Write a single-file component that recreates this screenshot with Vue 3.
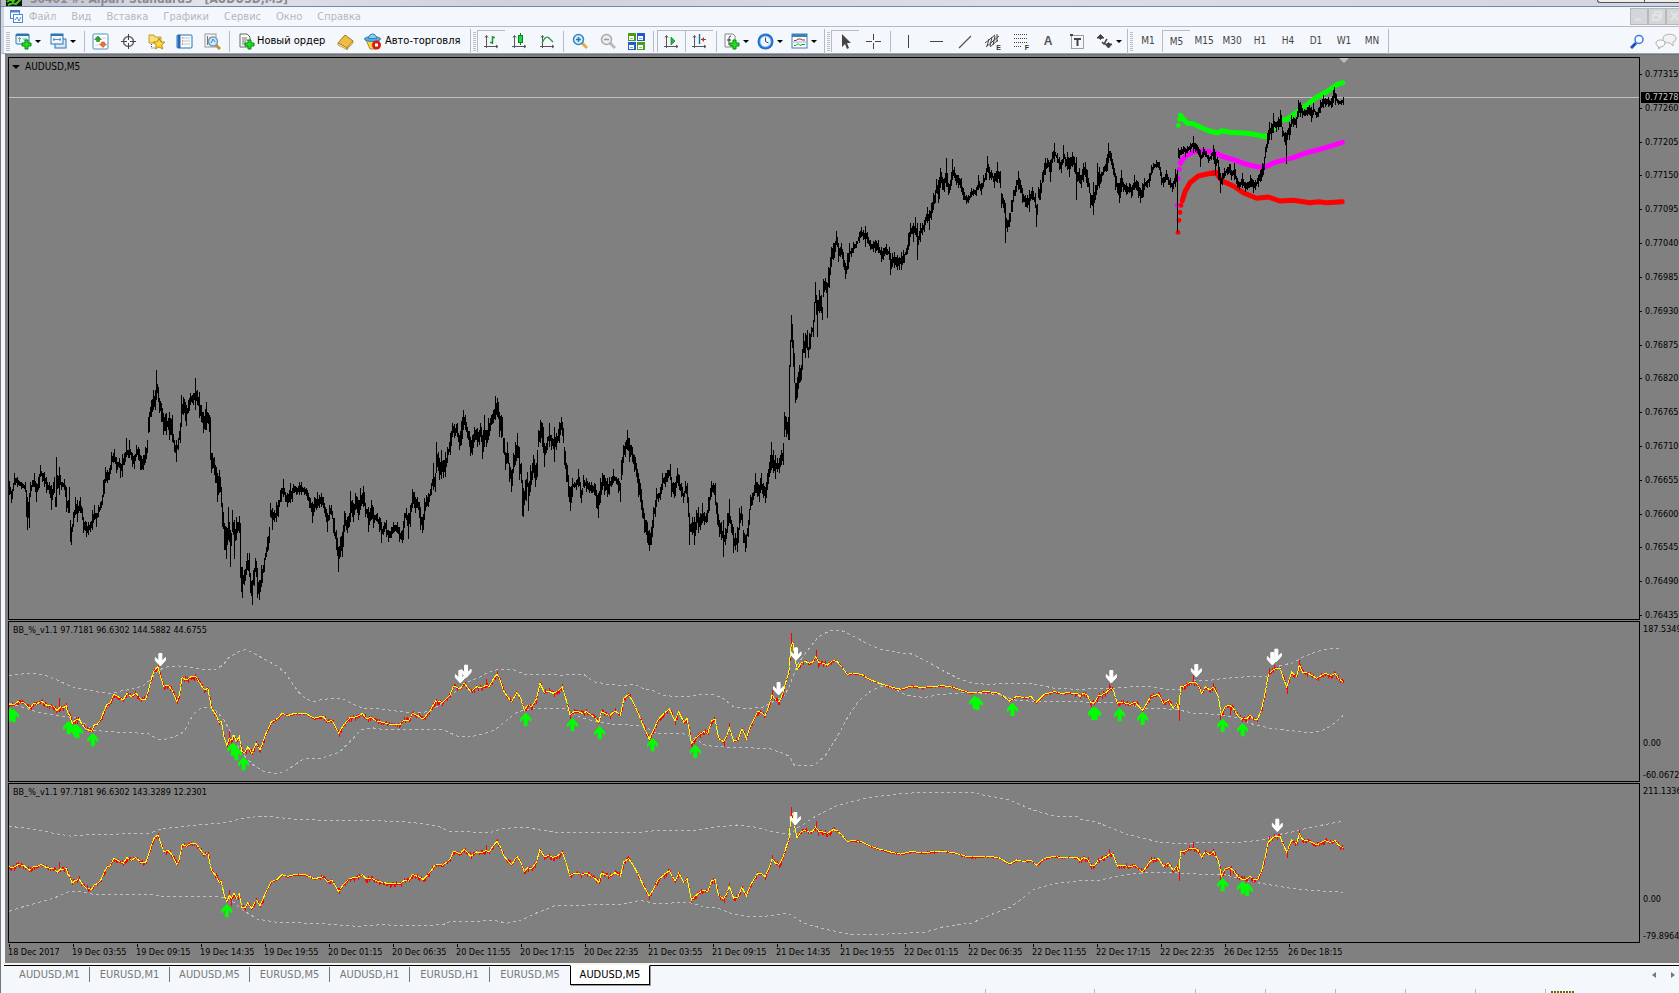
<script setup>
const menu = ['Файл', 'Вид', 'Вставка', 'Графики', 'Сервис', 'Окно', 'Справка']

const plus = '<path d="M10 7h3v3h3v3h-3v3h-3v-3H7v-3h3z" fill="#1fe01f" stroke="#078a12"/>'
const axes = '<path d="M3.500 3v12M1 13.500h14M2 4.500l1.500-2 1.500 2M13 12l2 1.500-2 1.500" fill="none" stroke="#555"/>'
const lens = (a, b, h) => `<path d="M10 10l5 5" stroke="${h}" stroke-width="3"/><circle cx="6.500" cy="6.500" r="5" fill="${a}" stroke="${b}" stroke-width="1.500"/>`
const tile = (x, y, c) => `<rect x="${x}" y="${y}" width="8" height="8" fill="${c}"/><rect x="${x + 1}" y="${y + 3}" width="5" height="4" fill="#fff"/><path d="M${x + 2} ${y + 5.5}h3" stroke="${c}" stroke-opacity=".6"/>`

const icons = {
  newChart: '<rect x="1" y="1" width="13" height="10" rx="1" fill="#eaf4fc" stroke="#2f74ad"/><path d="M1 2h13" stroke="#2f74ad" stroke-width="2"/><path d="M4.500 4v5M3 5.500h3M8 6h4" stroke="#6aa"/>' + plus,
  profiles: '<rect x="5" y="6" width="11" height="9" fill="#d7eafa" stroke="#2f74ad"/><rect x="1" y="1" width="12" height="10" fill="#eef6fd" stroke="#2f74ad"/><path d="M1 2h12" stroke="#2f74ad" stroke-width="2"/><path d="M3 6.500h8M4 5v3M10 5v3" stroke="#5e8fb5"/>',
  market: '<rect x="1" y="1" width="15" height="15" rx="1" fill="#fff" stroke="#4b93c7"/><path d="M3 4h4M3 7h1M10 5h4M3 12h4" stroke="#ccd"/><path d="M6 3l3.500 3.500H7.500v2h-3v-2H2.500z" fill="#2aa52a" stroke="#167016" stroke-width=".5"/><path d="M11 14.500L7.500 11H9.500V9h3v2h2z" fill="#f07038" stroke="#b33a10" stroke-width=".5"/>',
  target: '<circle cx="8.500" cy="8.500" r="5" fill="none" stroke="#666" stroke-width="1.500"/><path d="M8.500 1v6M8.500 10v6M1 8.500h6M10 8.500h6" stroke="#444"/>',
  favourites: '<path d="M1 2h5l1 2h6v6H1z" fill="#f9df7c" stroke="#c29a25"/><path d="M3.500 11v4h4" fill="none" stroke="#555" stroke-dasharray="1 1"/><path d="M11 5l1.700 3.700 4 .5-3 2.700.8 4-3.500-2-3.500 2 .8-4-3-2.700 4-.5z" fill="#ffd83c" stroke="#b8860b"/>',
  panel: '<rect x="1" y="2" width="15" height="13" rx="1" fill="#f7fbff" stroke="#2d6fb0"/><path d="M3 2v13" stroke="#2568b5" stroke-width="3"/><path d="M7 5h7M7 8h7M7 11h7" stroke="#c2c8d0"/><path d="M6 5h1M6 8h1M6 11h1" stroke="#c33"/>',
  tester: '<rect x="1" y="1" width="11" height="13" fill="#f5f5f0" stroke="#999"/><path d="M3.500 3v9M6 4v3" stroke="#678"/><path d="M12 12l4 4" stroke="#c7942a" stroke-width="3"/><circle cx="9" cy="8.500" r="4.500" fill="#cfe6fa" fill-opacity=".8" stroke="#6d9dc4" stroke-width="1.500"/><path d="M7 10l2-4 2 3" fill="none" stroke="#4479a8"/>',
  order: '<path d="M2 1h7l3 3v10H2z" fill="#fafafa" stroke="#666"/><path d="M4 5h5M4 7h6M4 9h4M4 11h3" stroke="#777"/>' + plus,
  book: '<path d="M1 10l7-8 8 6-6 7z" fill="#edbd45" stroke="#a8741a"/><path d="M1 10l9 5v1.500L1 12zM10 15l6-7v2l-6 6.500z" fill="#fff0b8" stroke="#a8741a" stroke-width=".7"/>',
  auto: '<path d="M2 7h13l-3 9H6z" fill="#f4d24a" stroke="#b98d1d"/><ellipse cx="8.500" cy="6" rx="8" ry="2.500" fill="#55aee0" stroke="#2e7fb3"/><path d="M4.500 5.500c0-6 8-6 8 0z" fill="#86cdf0" stroke="#2e7fb3"/><circle cx="12.500" cy="12" r="4.500" fill="#d81c10"/><rect x="11" y="10.500" width="3" height="3" fill="#fff"/>',
  bars: axes + '<path d="M9.500 3v8M9.500 4.500H12M7 9.500h2.500" stroke="#159a25" stroke-width="1.500"/>',
  candles: axes + '<path d="M9.500 0v12" stroke="#075"/><rect x="7.500" y="2.500" width="4" height="7" fill="#1fd846" stroke="#08831d"/>',
  line: axes + '<path d="M3 10c3-6 5-7 7-5l4 4" fill="none" stroke="#2a9a35" stroke-width="1.300"/>',
  zoomIn: lens('#d3eefc', '#3a82c0', '#e0b13c') + '<path d="M6.500 4v5M4 6.500h5" stroke="#2879bc" stroke-width="1.500"/>',
  zoomOut: lens('#ededed', '#aaa', '#bbb') + '<path d="M4 6.500h5" stroke="#999" stroke-width="1.500"/>',
  tiles: tile(0, 0, '#4b9d18') + tile(9, 0, '#2459c9') + tile(0, 9, '#2459c9') + tile(9, 9, '#4b9d18'),
  scroll: axes + '<path d="M8 4l4 4-4 4z" fill="#24b43a" stroke="#138025" stroke-width=".7"/>',
  shift: axes + '<path d="M8.500 1v10" stroke="#2471a8" stroke-width="1.500"/><path d="M10 6.500h5M12.500 4.500v4M11.500 5.500v2" fill="none" stroke="#b4380f"/>',
  indicators: '<path d="M2 1h8l2 2v11H2z" fill="#fafafa" stroke="#888"/><path d="M8 3C6 3 6 5 6 7v5M4 7h4" fill="none" stroke="#333"/>' + plus,
  clock: '<circle cx="8.500" cy="8.500" r="8" fill="#1d6fd0"/><circle cx="8.500" cy="8.500" r="5.500" fill="#eef6ff" stroke="#7ab4ee"/><path d="M8.500 4.500v4l3 1.500" fill="none" stroke="#444"/>',
  template: '<rect x="1" y="1" width="15" height="14" fill="#fafdff" stroke="#3e80b8"/><path d="M1 2.500h15" stroke="#3e80b8" stroke-width="3"/><path d="M3 7.500h2l2-1.500h3l1 1h3" fill="none" stroke="#a33"/><path d="M3 12.500h2l2-2 2 2 2-1h3" fill="none" stroke="#293"/><path d="M2 9h13" stroke="#9bc"/>',
  cursor: '<path d="M5 1v13l3-3 2 5 2-1-2-5h4z" fill="#444"/>',
  cross: '<path d="M8.500 1v6M8.500 10v6M1 8.500h6M10 8.500h6" stroke="#444"/>',
  vertical: '<path d="M8.500 2v13" stroke="#444"/>',
  horizontal: '<path d="M2 8.500h13" stroke="#444"/>',
  trend: '<path d="M3 15L15 3" stroke="#555" stroke-width="1.200"/>',
  channel: '<path d="M1 10l10-8M2 14L15 3M6 14l8-7M5 6l-2 7M8 4L6 13M11 3L9 12M13 1v8" stroke="#444"/>',
  fibo: '<path d="M2 1.500h14M2 5.500h14M2 9.500h14M2 13.500h8" stroke="#444" stroke-dasharray="1 1"/>',
  textLabel: '<rect x="3.500" y="2.500" width="12" height="13" fill="none" stroke="#444" stroke-dasharray="1 1"/><rect x="2" y="1" width="3" height="2" fill="#444"/><path d="M6 6h7M9.500 6v7" stroke="#444" stroke-width="2"/>',
  marks: '<path d="M1 5l3.500-3.500L8 5H6l-1.500 1.500L3 5zM9 11h2l1.500-1.500L14 11h2l-3.500 4z" fill="#444" stroke="#444"/><path d="M6 9l2 2 3-5" fill="none" stroke="#444" stroke-width="1.500"/>',
}

const toolbar = [
  { k: 'grip' }, { k: 'drop', i: 'newChart', t: 'Новый график' }, { k: 'drop', i: 'profiles', t: 'Профили' }, { k: 'sep', c: 's4' },
  { i: 'market', t: 'Обзор рынка' }, { i: 'target', t: 'Окно данных' }, { i: 'favourites', t: 'Навигатор' }, { i: 'panel', t: 'Терминал' }, { i: 'tester', t: 'Тестер' }, { k: 'sep', c: 's7' },
  { k: 'wide', i: 'order', l: 'Новый ордер', c: 'order' }, { i: 'book', t: 'Редактор' }, { k: 'wide', i: 'auto', l: 'Авто-торговля', c: 'auto' }, { k: 'sep', c: 's4 full' },
  { k: 'grip' }, { i: 'bars', t: 'Бары', on: true }, { i: 'candles', t: 'Свечи' }, { i: 'line', t: 'Линия' }, { k: 'sep', c: 's5' },
  { i: 'zoomIn', t: 'Увеличить' }, { i: 'zoomOut', t: 'Уменьшить' }, { i: 'tiles', t: 'Мозаика' }, { k: 'sep', c: 's7' },
  { i: 'scroll', t: 'Автопрокрутка', on: true }, { i: 'shift', t: 'Сдвиг графика', on: true }, { k: 'sep', c: 's7' },
  { k: 'drop', c: 'narrow', i: 'indicators', t: 'Индикаторы' }, { k: 'drop', c: 'narrow', i: 'clock', t: 'Периоды' }, { k: 'drop', c: 'narrow', i: 'template', t: 'Шаблоны' }, { k: 'sep', c: 's4 full' },
  { k: 'grip' }, { i: 'cursor', t: 'Курсор', on: true }, { i: 'cross', t: 'Перекрестие' }, { k: 'sep', c: 's7' },
  { i: 'vertical', t: 'Вертикальная линия' }, { i: 'horizontal', t: 'Горизонтальная линия' }, { i: 'trend', t: 'Трендовая линия' },
  { i: 'channel', t: 'Канал', g: 'E' }, { i: 'fibo', t: 'Фибоначчи', g: 'F' }, { k: 'letter', l: 'A' }, { i: 'textLabel', t: 'Текстовая метка' }, { k: 'drop', c: 'centred', i: 'marks', t: 'Стрелки' }, { k: 'sep', c: 's4 full' },
  { k: 'grip' },
  ...['M1', 'M5', 'M15', 'M30', 'H1', 'H4', 'D1', 'W1', 'MN'].map(l => ({ k: 'period', l, on: l === 'M5' })),
  { k: 'sep', c: 's4 full' },
]

const prices = ['0.77315', '0.77260', '0.77205', '0.77150', '0.77095', '0.77040', '0.76985', '0.76930', '0.76875', '0.76820', '0.76765', '0.76710', '0.76655', '0.76600', '0.76545', '0.76490', '0.76435']
const times = ['18 Dec 2017', '19 Dec 03:55', '19 Dec 09:15', '19 Dec 14:35', '19 Dec 19:55', '20 Dec 01:15', '20 Dec 06:35', '20 Dec 11:55', '20 Dec 17:15', '20 Dec 22:35', '21 Dec 03:55', '21 Dec 09:15', '21 Dec 14:35', '21 Dec 19:55', '22 Dec 01:15', '22 Dec 06:35', '22 Dec 11:55', '22 Dec 17:15', '22 Dec 22:35', '26 Dec 12:55', '26 Dec 18:15']
const tabs = ['AUDUSD,M1', 'EURUSD,M1', 'AUDUSD,M5', 'EURUSD,M5', 'AUDUSD,H1', 'EURUSD,H1', 'EURUSD,M5', 'AUDUSD,M5']

let seed = 77278
const rnd = () => {
  seed = (seed * 1103515245 + 12345) % 2147483648
  return seed / 2147483648
}
// Each block of samples has its own origin and its own units per pixel.
const decode = (x0, y0, sx, text) => text.split(';').map(s => {
  const [x, ...ys] = s.trim().split(/\s+/).map(Number)
  return [x0 + x / sx, ...ys.map(y => y0 + y / 3)]
})
const strips = (a, b, c) => [...decode(0, 615, 2.8, a), ...decode(540, 615, 2.8, b), ...decode(1080, 615, 3, c)]
const toPoints = pts => pts.map(([x, y]) => `${x.toFixed(1)},${y.toFixed(1)}`).join(' ')

const range = [
  ...decode(0, 350, 3, '26 393 435;34 422 458;43 370 405;52 382 410;62 395 418;74 395 425;79 420 500;82 440 540;86 430 535;89 397 440;97 390 410;101 368 410;107 400 455;113 382 420;121 345 382;127 370 395;133 365 410;139 380 430;146 395 432;152 405 480;158 395 435;163 380 430;166 440 470;169 322 470;177 350 435;184 395 420;191 388 420;197 410 485;203 450 490;207 410 490;210 510 575;214 530 585;219 485 530;226 440 495;232 450 515;239 440 490;245 475 510;250 500 550;257 515 560;264 515 555;271 515 545;277 480 540;282 465 510;287 490 530;294 465 500;300 455 480;306 435 465;310 390 440;315 350 400;321 360 400;327 355 390;334 305 360;341 297 335;348 320 370;356 325 355;360 340 383;366 312 380;373 310 345;377 265 322;383 300 325;388 270 325;396 310 350;402 315 358;408 285 320;414 290 330;420 315 360;430 315 360;436 290 340;441 270 310;445 200 250;452 150 200;458 120 180;465 120 180;469 60 150;474 110 155;478 145 190;484 160 215;489 190 255;498 190 255;503 205 240;508 185 270;516 195 275;521 270 305;528 270 335;533 265 300;539 220 280;542 135 230;549 142 195;557 165 228;564 150 190;570 130 165;578 130 165;586 85 180;592 120 165;596 125 205;603 165 215;610 185 250;618 155 240;626 195 245;629 200 330;634 310 370;641 320 375;646 345 400;652 370 455;658 360 430;664 410 470;667 460 530;673 520 600;679 530 628;685 470 570;691 540 650;697 480 545;703 510 628;709 500 570;716 498 550;719 520 685;724 650 725;727 650 745;733 660 705;740 610 660;746 610 680;750 670 730;755 690 765;760 660 705;765 625 665;771 655 745;778 690 750;784 645 710;791 625 665;797 590 620;802 560 605;806 530 580;810 460 500;816 475 540;823 480 515;829 455 515;835 450 500;841 420 455;849 388 440;855 425 455;862 430 470;870 400 460;876 415 455;880 402 430;888 410 435;896 395 435;904 395 435;912 410 435;920 420 450;928 440 475;936 455 518;942 440 485;950 425 475;957 435 475;964 428 470;972 460 490;980 490 545;987 465 510;993 465 495;1000 505 550;1008 540 600;1014 590 665;1019 560 620;1026 545 620;1032 482 545;1040 500 550;1046 490 530;1051 423 515;1058 460 515;1066 428 480;1073 450 510;1080 415 480;1088 408 470;1096 460 500;1104 470 545;1112 450 510;1120 470 535;1130 490 515;1138 500 545;1144 515 578;1152 515 545;1158 510 560;1165 540 575;1172 530 565;1180 515 550;1190 515 550;1198 530 575;1205 540 580;1211 490 535;1217 475 510;1223 490 568;1229 465 530;1237 417 475;1245 440 490;1252 440 475;1259 470 540'),
  ...decode(400, 350, 3, '66 500 548;72 445 510;78 435 470;85 430 470;92 400 435;98 340 420;104 370 425;109 275 370;116 325 390;123 300 388;130 330 385;136 305 380;142 290 340;149 250 315;156 218 260;163 222 265;170 218 260;176 255 300;182 212 285;188 180 240;196 195 240;202 230 265;209 260 318;215 255 315;222 230 275;230 235 290;236 240 285;241 220 260;246 255 328;251 195 290;259 240 290;265 205 270;272 195 225;280 180 220;286 138 210;292 145 200;298 185 260;304 195 265;310 265 310;316 305 360;322 275 340;328 340 395;334 360 425;340 310 370;346 275 345;352 250 325;357 290 390;362 340 400;365 390 497;370 415 500;376 390 450;380 365 410;385 400 482;391 345 425;398 315 370;404 345 412;410 300 380;413 240 290;419 210 280;425 220 290;432 280 352;440 260 300;448 220 290;454 255 300;461 230 335;468 250 300;476 215 280;482 202 240;488 235 280;493 290 345;499 340 395;504 375 440;509 410 482;515 385 440;522 395 415;528 390 420;535 358 410;540 395 445;544 420 458;550 375 410;558 385 425;566 395 430;574 395 430;582 400 435;588 420 475;594 430 505;600 385 460;606 370 420;613 375 435;620 385 440;628 380 435;634 380 410;640 358 400;648 382 402;655 385 430;660 400 455;664 330 390;668 285 340;675 275 320;682 240 300;688 265 335;695 290 335;702 315 365;708 340 380;714 370 440;720 400 455;726 450 505;733 490 550;740 515 580;746 540 602;752 530 585;758 470 535;764 450 500;767 415 470;773 430 455;780 410 450;786 370 420;794 370 410;800 360 395;809 342 390;814 380 440;823 400 445;830 355 400;836 375 420;843 400 440;850 430 460;856 393 430;860 400 460;864 440 500;868 490 585;876 500 555;883 500 585;888 480 540;895 470 548;901 490 540;905 460 520;911 485 525;918 490 520;925 440 490;932 393 440;938 398 430;944 400 465;950 460 525;956 510 560;963 515 570;970 510 620;976 535 585;982 490 550;986 447 520;993 510 550;1000 530 608;1006 550 600;1012 530 605;1018 475 540;1023 467 510;1030 540 580;1036 555 605;1043 510 560;1050 435 480;1057 430 465;1065 370 430;1072 395 440;1076 405 455;1082 370 420;1088 400 445;1094 410 458;1100 370 420;1106 335 380;1112 275 360;1118 300 370;1124 315 388;1130 325 365;1136 325 370;1142 300 345;1148 280 345'),
  ...decode(770, 120, 3, '42 875 950;48 890 950;53 890 960;56 735 960;60 660 740;64 585 665;68 660 740;72 700 790;76 790 850;82 770 835;87 735 790;93 735 780;98 640 700;104 640 715;110 630 690;114 680 713;118 640 690;123 620 650;128 600 650;131 545 605;134 485 550;140 540 650;146 510 580;152 525 580;156 560 600;159 478 530;166 475 510;172 490 595;175 440 500;180 410 465;184 380 440;190 370 420;199 332 375;205 370 425;212 370 405;219 395 440;226 430 478;232 400 450;236 370 425;243 385 410;250 365 400;258 362 385;266 335 370;272 322 350;278 330 360;284 318 380;292 335 370;300 360 390;308 362 395;316 360 400;324 360 400;332 380 425;340 385 420;348 372 405;356 380 420;359 400 465;366 400 440;372 395 445;380 405 450;387 410 450;394 395 450;400 390 430;408 385 405;414 340 390;420 310 350;428 310 365;435 292 345;442 310 420;449 310 365;456 310 345;462 300 335;470 260 310;476 270 330;483 250 300;490 220 270;498 178 220;504 180 250;509 143 205;516 170 210;522 175 215;527 115 200;534 190 225;540 180 210;545 118 180;551 140 175;558 165 195;565 165 205;572 175 215;580 205 240;588 225 253;595 225 250;602 205 230;610 208 228;618 200 228;625 165 210;632 190 225;640 165 200;645 160 180;650 108 155;656 140 180;664 150 180;672 160 205;680 125 190;688 155 190;694 220 265;700 235 265;706 250 368;712 300 335;718 280 320;724 240 275;730 210 245;737 180 215;744 152 210;750 180 220;757 205 250;764 225 260;771 225 265;778 210 275;786 200 240;794 220 265;799 255 322;805 200 235;811 180 240;816 155 190;824 115 165;832 115 145;839 120 185;846 95 130;853 70 125;860 100 130;868 112 150;874 120 158;879 75 130;886 110 140;892 95 150;898 115 170;905 95 140;912 110 155;919 110 240;926 145 190;932 165 205;938 130 185;944 125 170;950 150 200;956 190 220;961 220 265;970 185 285;976 195 240;982 130 210;988 140 205;994 155 185;1000 140 165;1007 115 155;1015 70 130;1022 100 135;1029 130 165;1036 160 210;1042 190 220;1046 190 250;1052 150 215;1060 185 215;1068 190 225;1076 190 220;1084 200 235;1092 165 210;1098 180 210;1104 185 235;1110 205 250;1116 190 235;1122 175 210;1130 180 205;1136 160 200;1143 135 165;1150 130 150;1158 120 145;1166 125 150;1173 155 195;1180 170 200;1187 150 180;1194 170 195;1200 175 205;1207 190 215;1214 148 200;1220 150 200;1222 150 335'),
  ...decode(1150, 60, 3, '85 265 290;92 262 285;100 258 282;106 265 290;112 258 280;120 250 275;128 228 280;136 250 275;143 260 285;151 270 320;158 262 290;166 272 292;174 285 310;182 280 300;188 255 300;194 275 345;200 290 310;205 300 360;209 340 400;215 340 375;222 325 355;230 320 345;237 312 340;244 330 360;252 310 360;260 355 385;268 365 390;276 340 385;284 365 395;292 365 390;300 345 380;308 360 400;316 360 390;324 345 380;330 330 365;336 310 350;341 290 330;346 260 295;351 220 265;357 185 240;363 190 240;370 160 220;377 185 215;384 170 210;391 150 200;397 200 230;403 220 245;407 220 312;411 210 240;417 185 240;424 165 200;430 170 200;437 170 205;444 120 170;450 125 170;456 145 175;463 148 168;470 140 168;476 135 165;483 140 185;490 130 165;497 155 175;504 145 170;511 120 160;518 105 145;526 115 140;534 110 140;542 115 145;548 90 130;551 82 115;556 100 135;564 120 135;572 120 135;578 110 135;581 108 125'),
]

function barsPath() {
  const peaks = new Map(range.map(([x, hi, lo]) => [Math.round(x), [hi, lo]]))
  let d = ''
  let close = null
  let k = 0
  for (let x = 9; x <= 1343; x++) {
    while (k < range.length - 2 && range[k + 1][0] < x) k++
    const [xa, ha, la] = range[k]
    const [xb, hb, lb] = range[k + 1]
    const t = Math.max(0, Math.min(1, (x - xa) / (xb - xa || 1)))
    const mid = (ha + la + (hb + lb - ha - la) * t) / 2
    const half = Math.min(la - ha, lb - hb) / 2
    const next = mid + half * (rnd() * 1.4 - 0.7)
    let hi = Math.min(close ?? next, next, mid - half * 0.3) - rnd() * half * 0.4
    let lo = Math.max(close ?? next, next, mid + half * 0.3) + rnd() * half * 0.4
    const peak = peaks.get(x)
    if (peak) [hi, lo] = peak
    if (x === 1178) [hi, lo] = [148, 158]
    close = Math.max(hi, Math.min(lo, next))
    d += `M${x}.5 ${Math.round(hi)}V${Math.max(Math.round(lo), Math.round(hi) + 3)}`
  }
  return d
}
const bars = barsPath()

const bandSet = [
  { c: 'lime', dots: '85 196;89 178;372 205', lines: ['91 166;100 177;112 190;130 191;150 201;180 214;203 219;215 212;240 217;290 220;320 224;345 230;350 226', '395 180;412 178;440 157;470 135;500 112;530 95;560 74;578 68'] },
  { c: 'magenta', dots: '82 436;85 355;88 328', lines: ['91 310;97 298;110 286;130 275;160 273;195 278;220 290;250 299;290 313;320 320;345 321;375 307;430 293;470 278;520 265;577 247'] },
  { c: 'red', dots: '84 517;87 481;90 457;93 436', lines: ['97 422;105 395;120 368;145 348;175 341;198 337;215 362;250 378;280 398;320 415;355 411;390 423;430 421;480 428;505 425;530 428;577 425'] },
].map(b => ({ c: b.c, dots: decode(1150, 60, 3, b.dots), lines: b.lines.map(l => toPoints(decode(1150, 60, 3, l))) }))

const base = strips(
  '26 268;38 270;50 260;68 264;82 280;95 265;103 268;115 258;130 270;150 275;160 287;170 275;178 278;185 272;190 295;195 300;202 325;212 315;222 312;228 325;240 342;256 348;264 330;272 328;282 315;292 285;300 268;308 265;318 238;330 245;345 255;355 235;368 245;380 235;395 252;408 252;416 225;424 190;432 165;442 155;450 185;458 215;470 210;482 225;495 260;502 240;510 188;522 195;535 185;548 185;560 205;572 225;582 220;592 280;604 298;614 322;620 320;628 370;635 390;642 370;648 378;655 360;662 378;670 365;677 410;686 412;694 395;705 415;717 385;728 405;735 385;745 355;760 320;778 310;790 295;805 302;825 295;855 295;880 310;903 303;918 320;930 315;948 355;962 330;980 308;1000 305;1015 295;1025 310;1040 308;1055 318;1070 322;1090 328;1120 328;1132 315;1145 315;1155 295;1170 302;1185 312;1205 285;1220 258;1240 262;1260 240;1270 212;1288 222;1300 205;1318 230;1335 215;1350 218;1360 210;1370 215;1382 190;1392 178;1400 195;1412 232;1432 260;1448 232;1458 250;1468 285;1478 270;1488 275;1502 252',
  '0 205;12 232;25 228;36 235;50 228;62 215;72 250;84 300;95 290;108 290;118 295;130 290;150 305;165 322;172 290;195 302;210 288;225 300;235 250;248 238;260 260;275 295;290 335;306 372;318 345;330 315;350 292;362 282;378 318;388 290;403 322;412 310;424 385;435 370;445 360;458 350;470 355;480 318;490 312;500 370;514 380;524 360;530 338;542 378;554 375;565 340;578 370;588 335;600 310;610 290;620 292;630 302;640 275;650 240;660 255;670 260;680 235;690 195;697 170;702 100;708 80;714 130;720 165;730 145;740 138;755 145;765 140;772 125;780 142;795 145;805 150;820 136;832 140;845 155;860 178;875 175;900 178;920 192;945 203;980 215;1010 223;1040 213;1070 218;1100 214;1130 212;1160 218;1200 233;1255 230;1285 235;1315 258;1335 243;1355 248;1375 245;1390 262;1412 238;1440 230;1460 235;1480 233;1505 236',
  '0 245;10 235;22 240;32 262;45 262;55 242;65 240;78 232;92 220;100 225;112 265;122 262;135 264;150 268;165 262;178 275;187 287;200 265;212 245;235 238;250 265;265 255;280 280;290 265;296 285;302 215;315 212;330 202;345 202;355 210;365 235;375 215;390 225;400 215;415 245;424 300;435 275;448 270;460 280;475 305;490 312;502 310;510 300;520 312;533 312;545 280;555 235;565 180;578 165;588 160;600 160;610 190;620 215;635 172;650 185;658 150;668 172;685 175;710 190;735 175;752 182;765 175;775 190;788 200')
const spikes = strips('166 250;442 147;640 348;648 405;948 365;1360 192;1392 168;1512 203', '62 208;424 395;514 395;530 325;650 226;704 55;772 105;778 158;1390 266', '32 276;86 206;296 318;340 180;400 205;421 315;450 300;497 322;568 158;583 150;620 238;656 136')

function oscillator(map) {
  const wave = base.map(([x, y]) => [x, map(y)])
  let red = ''
  let k = 0
  for (let x = 9; x <= 1343; x++) {
    while (k < wave.length - 2 && wave[k + 1][0] < x) k++
    const [xa, ya] = wave[k]
    const [xb, yb] = wave[k + 1]
    const y = ya + (yb - ya) * Math.min(1, (x - xa) / (xb - xa))
    const calm = (x > 835 && x < 1075) || (x > 265 && x < 320)
    const y2 = y + (rnd() - 0.5) * (calm ? 2 : 6)
    red += `M${x}.5 ${Math.round(Math.min(y, y2))}V${Math.round(Math.max(y, y2)) + 1}`
  }
  for (const [x, y] of spikes) {
    const near = wave.reduce((a, b) => (Math.abs(b[0] - x) < Math.abs(a[0] - x) ? b : a))
    red += `M${Math.round(x)}.5 ${Math.round(map(y))}V${Math.round(near[1])}`
  }
  return { line: toPoints(wave), red }
}

const subs = [
  {
    id: 'a', top: 622, title: 'BB_%_v1.1 97.7181 96.6302 144.5882 44.6755', max: '187.5349', min: '-60.0672',
    ...oscillator(y => y),
    upper: strips(
      '26 181;80 175;120 178;160 195;200 215;240 224;280 232;310 235;340 228;370 222;400 213;420 195;440 170;460 157;500 153;540 158;580 164;605 162;625 150;640 128;665 112;688 103;705 112;740 132;775 153;800 175;815 200;835 230;855 250;875 260;900 254;930 250;960 252;990 268;1015 280;1060 281;1110 288;1150 293;1190 291;1210 285;1240 262;1260 245;1280 225;1300 205;1340 188;1370 170;1400 162;1435 163;1470 178',
      '0 178;30 178;60 181;90 178;125 180;150 200;190 208;240 212;265 208;290 222;320 228;345 242;380 244;420 244;450 238;490 240;515 252;545 278;580 280;620 278;650 262;685 240;700 210;720 150;750 105;780 65;810 48;845 47;880 65;920 88;960 105;1000 112;1040 117;1080 137;1130 168;1170 190;1210 204;1250 208;1300 206;1350 205;1390 208;1440 220;1505 223',
      '0 223;40 221;90 222;140 216;190 214;230 217;260 223;300 223;330 208;345 195;390 196;430 190;470 188;510 184;560 184;575 170;600 152;640 143;670 125;710 110;750 100;783 102'),
    lower: strips(
      '26 265;60 275;100 290;150 299;185 305;215 308;235 325;260 345;300 350;350 352;415 356;440 372;465 372;490 365;515 350;540 300;560 282;585 276;600 285;625 310;650 360;670 400;690 430;715 455;740 470;775 476;800 468;825 450;850 432;900 430;950 412;980 380;1010 345;1040 338;1070 343;1240 344;1280 363;1315 366;1350 358;1385 345;1420 315;1450 290;1480 282',
      '0 280;70 280;90 295;120 310;150 318;200 328;290 332;325 355;400 355;440 375;465 392;550 398;640 400;680 415;700 425;712 450;770 450;800 420;830 370;860 310;890 260;930 225;960 213;990 220;1020 238;1050 245;1080 247;1110 240;1150 236;1190 232;1250 235;1290 240;1330 255;1400 261;1505 259',
      '0 260;40 265;90 262;140 266;190 280;250 280;300 286;350 296;420 298;470 308;520 328;570 340;620 346;680 352;720 350;750 335;770 318;788 302'),
    down: strips('449 135;1289 186;1305 170', '717 118;668 222', '94 186;349 168;577 132;589 122'),
    up: strips('28 298;38 301;192 337;211 345;217 349;260 373;652 401;662 415;682 445;1472 312', '91 328;167 352;315 388;435 408;1217 261;1225 264;1323 282', '40 294;47 295;119 298;188 309;428 330;488 343'),
  },
  {
    id: 'b', top: 784, title: 'BB_%_v1.1 97.7181 96.6302 143.3289 12.2301', max: '211.1336', min: '-79.8964',
    ...oscillator(y => 615 + ((y - 615) * 3 * 0.848 + 528.5) / 3),
    upper: strips(
      '26 634;100 643;150 655;200 664;250 658;415 656;450 642;560 629;620 625;690 608;740 603;820 612;900 616;1040 616;1150 622;1225 632;1260 650;1310 650;1370 654;1410 640;1470 637',
      '0 645;40 651;290 651;320 647;420 648;490 636;550 630;600 636;650 650;700 658;720 640;770 605;830 572;920 548;1020 535;1120 531;1220 533;1240 540;1310 553;1380 585;1440 603;1505 606',
      '0 612;50 622;140 658;240 682;300 686;400 682;490 681;550 674;600 658;640 650;700 635;788 619'),
    lower: strips(
      '26 889;60 877;100 865;150 850;190 831;230 830;270 840;430 838;450 844;600 843;640 850;680 885;720 912;770 921;900 926;1000 934;1070 929;1150 933;1240 929;1260 920;1310 921;1380 915;1420 925;1460 915;1500 895',
      '0 890;40 873;230 867;280 856;320 865;420 863;460 876;500 880;540 897;590 906;650 902;695 895;740 925;800 943;870 958;960 958;1080 951;1130 935;1210 924;1260 900;1320 875;1380 825;1440 805;1505 799',
      '0 797;60 795;110 785;160 775;250 772;330 776;440 780;500 797;560 808;620 818;690 826;788 832'),
    down: [...decode(540, 615, 2.8, '715 612'), ...decode(1080, 615, 3, '592 632')],
    up: [...decode(0, 615, 2.8, '635 886'), ...decode(1080, 615, 3, '428 808;488 817;502 823')],
  },
]
const arrow = 'M-1.5 6.500V-1L-5 2.500V-0.500L0 -6L5 -0.500V2.500L1.500 -1V6.500Z'
</script>

<template>
  <div class="app">
    <header class="title">
      <svg class="logo" width="16" height="16" viewBox="0 0 16 16" aria-hidden="true">
        <rect width="16" height="16" fill="#111" /><path d="M1 12l4-3 2 3 3-5 5-3M2 15l5-2 3 1 5-5" fill="none" stroke="#47c91a" stroke-width="2" />
      </svg>
      <span class="caption">50401 #: Alpari-Standard3 - [AUDUSD,M5]</span>
      <span class="frame"><i></i></span>
    </header>
    <nav class="menu">
      <svg width="15" height="15" viewBox="0 0 15 15" aria-hidden="true">
        <rect x="1.500" y="1.500" width="9" height="8" fill="#fff" stroke="#4b86d6" /><path d="M1 2.500h10" stroke="#4b86d6" stroke-width="2" />
        <rect x="4.500" y="5.500" width="9" height="8" fill="#fff" stroke="#4b86d6" /><path d="M6 11l2-3 2 4 2-4" fill="none" stroke="#4b86d6" />
      </svg>
      <button v-for="m in menu" :key="m" type="button" class="menu-item">{{ m }}</button>
      <div class="mdi">
        <button type="button" aria-label="Свернуть"><svg width="14" height="14"><path d="M3 10.500h6" stroke="#e2e3e5" stroke-width="2" /></svg></button>
        <button type="button" aria-label="Восстановить"><svg width="14" height="14"><path d="M5 5V3h6v6H9M3 6h6v5H3z" fill="none" stroke="#e2e3e5" stroke-width="2" /></svg></button>
        <button type="button" aria-label="Закрыть"><svg width="14" height="14"><path d="M4 3l7 8M11 3l-7 8" stroke="#e2e3e5" stroke-width="2" /></svg></button>
      </div>
    </nav>
    <div class="toolbar">
      <template v-for="(b, n) in toolbar" :key="n">
        <i v-if="b.k === 'grip'" class="grip"></i>
        <i v-else-if="b.k === 'sep'" class="sep" :class="b.c"></i>
        <button v-else type="button" class="tool" :class="[b.k, b.c, { on: b.on }]" :aria-label="b.l || b.t">
          <svg v-if="b.i" width="17" height="17" viewBox="0 0 17 17" aria-hidden="true" v-html="icons[b.i]"></svg>
          <span v-if="b.l">{{ b.l }}</span>
          <small v-if="b.g">{{ b.g }}</small>
          <i v-if="b.k === 'drop'" class="caret"></i>
        </button>
      </template>
      <div class="right">
        <button type="button" class="tool" aria-label="Поиск">
          <svg width="15" height="15" viewBox="0 0 15 15"><path d="M1 14l5-5" stroke="#1d4fc0" stroke-width="3" /><circle cx="9" cy="5.500" r="4" fill="#f5faff" stroke="#3a78e0" stroke-width="1.500" /></svg>
        </button>
        <button type="button" class="tool chat" aria-label="Чат">
          <svg width="22" height="17" viewBox="0 0 22 17"><path d="M8 5c0-5 13-5 13 0 0 3-2 4-3 4v4l-3-3C10 10 8 8 8 5z" fill="#f1f1f1" stroke="#b5b5b5" /><path d="M1 10c0-4 9-4 9 0 0 3-3 4-5 4l-1 2-1-3c-1 0-2-1-2-3z" fill="#fafafa" stroke="#aaa" /></svg>
        </button>
      </div>
    </div>

    <main class="chart">
      <section class="row main-row">
        <div class="plot">
          <svg class="canvas" aria-label="AUDUSD,M5">
            <g transform="translate(-9,-58)">
              <path d="M9 97.500H4000" stroke="#c0c0c0" shape-rendering="crispEdges" />
              <path d="M1339 58h10l-5 5z" fill="#c0c0c0" />
              <g v-for="b in bandSet" :key="b.c" :fill="b.c" :stroke="b.c">
                <circle v-for="(p, n) in b.dots" :key="n" :cx="p[0]" :cy="p[1]" r="2" />
                <polyline v-for="l in b.lines" :key="l" :points="l" fill="none" stroke-width="5" stroke-linejoin="round" stroke-linecap="round" />
              </g>
              <path :d="bars" stroke="#000" shape-rendering="crispEdges" />
            </g>
          </svg>
          <div class="label symbol"><i class="caret"></i>AUDUSD,M5</div>
        </div>
        <div class="axis price-axis">
          <span v-for="p in prices" :key="p" class="tick">{{ p }}</span>
          <span class="current">0.77278</span>
        </div>
      </section>
      <section v-for="s in subs" :key="s.id" class="row" :class="'sub-' + s.id">
        <div class="plot">
          <svg class="canvas" :aria-label="s.title">
            <g :transform="`translate(-9,-${s.top})`">
              <polyline class="band" :points="toPoints(s.upper)" />
              <polyline class="band" :points="toPoints(s.lower)" />
              <path :d="s.red" stroke="red" shape-rendering="crispEdges" />
              <polyline class="signal" :points="s.line" />
              <path v-for="(p, n) in s.up" :key="'u' + n" :d="arrow" fill="lime" stroke="lime" :transform="`translate(${p[0]},${p[1]})`" />
              <path v-for="(p, n) in s.down" :key="'d' + n" :d="arrow" fill="#fff" stroke="#fff" :transform="`translate(${p[0]},${p[1]}) rotate(180)`" />
            </g>
          </svg>
          <div class="label">{{ s.title }}</div>
        </div>
        <div class="axis sub-axis"><span>{{ s.max }}</span><span class="zero">0.00</span><span>{{ s.min }}</span></div>
      </section>
      <div class="times"><span v-for="t in times" :key="t">{{ t }}</span></div>
    </main>

    <footer class="tabs">
      <button v-for="(t, n) in tabs" :key="n" type="button" class="tab" :class="{ active: n === 7 }">{{ t }}</button>
      <div class="scrollers">
        <button type="button" aria-label="Назад"><i class="left"></i></button>
        <button type="button" aria-label="Вперёд"><i class="forward"></i></button>
      </div>
    </footer>
    <div class="status"><i class="c1"></i><i class="c2"></i><i class="c3"></i><i class="c3"></i><i class="c3"></i><i class="c3"></i><i class="c3"></i><i class="net"><b></b></i></div>
  </div>
</template>

<style>
html, body { margin: 0; background: #f4f7fc; }
</style>
<style scoped>
* { box-sizing: border-box; }
button { border: 0; background: none; padding: 0; font: inherit; color: inherit; }
.app {
  display: flex; flex-direction: column; height: 100vh; overflow: hidden;
  font: 11px/14px "DejaVu Sans Condensed", "DejaVu Sans", "Noto Sans", sans-serif;
  background: #f4f7fc; border-left: 1px solid #77737a; color: #000;
}
.title { flex: none; height: 7px; overflow: hidden; display: flex; align-items: flex-end; padding-left: 5px; background: linear-gradient(100deg, #b9bdc8, #e2e4ea 12%, #cfd2da 30%, #dcdee5 60%, #d3d6df); border-bottom: 1px solid #7088b4; }
.logo { flex: none; margin-right: 8px; }
.caption { font: bold 12px/14px "DejaVu Sans Condensed", sans-serif; color: #8b8b90; white-space: nowrap; }
.frame { margin-left: auto; align-self: flex-start; width: 82px; height: 3px; border: solid #555; border-width: 0 0 1px 1px; border-radius: 0 0 0 3px; background: #eee; }
.frame i { display: block; width: 47px; height: 2px; border-right: 1px solid #555; }
.menu { flex: none; height: 20px; display: flex; align-items: center; padding-left: 5px; border-bottom: 1px solid #b5bac4; border-left: 3px solid #cdd6e6; }
.menu-item { color: #b4b8be; margin: 0 10px 0 5px; }
.mdi { margin-left: auto; display: flex; height: 17px; border: 1px solid #b8b8b8; border-right: 0; }
.mdi button { width: 18px; background: #d3d5d8; border-right: 2px solid #b8b8b8; height: 15px; overflow: hidden; }
.mdi button:last-child { width: 12px; border: 0; }
.toolbar { flex: none; height: 27px; display: flex; align-items: center; border-left: 3px solid #cdd6e6; padding: 2px 0 0 1px; border-bottom: 1px solid #9da3ae; }
.grip { flex: none; width: 4px; height: 19px; margin: 0 2px 0 1px; background: repeating-linear-gradient(#b9bec8 0 1px, transparent 1px 2px); }
.grip:not(:first-child) { width: 3px; margin: 0 1px; }
.sep { flex: none; height: 21px; background: linear-gradient(#b5bac4, #b5bac4) center / 1px 100% no-repeat; }
.s4 { width: 4px; }
.s5 { width: 5px; }
.s7 { width: 7px; }
.full { height: 25px; }
.tool { flex: none; position: relative; width: 28px; height: 22px; display: flex; align-items: center; justify-content: center; }
.tool.on { border: solid #b5bac4; border-width: 1px 0 0 1px; }
.tool svg { flex: none; }
.drop { width: 35px; padding-right: 4px; }
.drop.narrow { width: 34px; padding-right: 2px; }
.drop.centred { padding: 0 0 0 2px; }
.caret { width: 0; height: 0; border: solid transparent; border-width: 3px 3px 0; border-top-color: #000; margin-left: 3px; }
.wide { justify-content: flex-start; padding-left: 5px; gap: 2px; white-space: nowrap; }
.order { width: 98px; }
.auto { width: 109px; gap: 4px; }
.wide span { margin-bottom: 1px; }
.letter { font: bold 12px/14px "Liberation Sans", sans-serif; color: #555; }
.tool small { position: absolute; right: 5px; bottom: 0; font: bold 7px/8px "Liberation Sans", sans-serif; color: #333; background: #f4f7fc; }
.period { font-size: 10px; color: #444; }
.right { margin-left: auto; display: flex; }
.right .chat { width: 28px; padding-left: 2px; }

.chart { flex: 1; min-height: 0; display: flex; flex-direction: column; gap: 1px; margin-left: 4px; padding: 3px 0 0 3px; background: #808080; box-shadow: inset 0 1px #6e7278; font-size: 9px; line-height: 11px; border-bottom: 2px solid #f5f5ee; }
.row { display: flex; min-height: 0; }
.main-row { flex: 563 1 0; }
.sub-a { flex: 161 1 0; }
.sub-b { flex: 160 1 0; }
.plot { flex: 1; min-width: 0; position: relative; border: 1px solid #000; }
.canvas { position: absolute; inset: 0; width: 100%; height: 100%; }
.label { position: relative; padding: 3px 4px; }
.symbol { font-size: 10px; }
.symbol .caret { display: inline-block; border-width: 4px 4px 0; margin: 0 5px 1px -1px; }
.axis { flex: none; width: 39px; position: relative; overflow: hidden; }
.price-axis { display: flex; flex-direction: column; justify-content: space-between; padding: 12px 0 0; margin-bottom: -1px; }
.tick { display: flex; align-items: center; gap: 3px; height: 11px; }
.tick::before { content: ""; width: 2px; height: 1px; background: #000; }
.current { position: absolute; left: 1px; right: 0; top: 35px; background: #000; color: #c8c8c8; padding-left: 4px; }
.sub-axis { display: flex; flex-direction: column; padding: 3px 0 1px 3px; }
.zero { margin: auto 0 21px; }
.sub-b .zero { margin-bottom: 26px; }
.times { flex: none; height: 19px; display: flex; overflow: hidden; }
.times span { flex: none; width: 64px; white-space: nowrap; padding-top: 3px; background: linear-gradient(#000, #000) 1px 0 / 1px 3px no-repeat; }
.band { fill: none; stroke: #c0c0c0; stroke-dasharray: 3 3; shape-rendering: crispEdges; }
.signal { fill: none; stroke: #ff0; stroke-dasharray: 12 1; shape-rendering: crispEdges; }

.tabs { flex: none; height: 24px; display: flex; align-items: flex-start; margin-left: 3px; padding-left: 6px; border-top: 1px solid #000; }
.tab { width: 80px; height: 15px; margin-top: 1px; color: #777; border-right: 1px solid #777; }
.tab:nth-last-child(3) { border-right: 0; }
.tab.active { height: 20px; margin-top: -1px; color: #000; background: #fff; border: 1px solid #000; border-top-color: #fff; box-shadow: 1px 1px #999; }
.scrollers { margin: 0 -3px 0 auto; display: flex; padding-top: 5px; }
.scrollers button { width: 19px; height: 8px; }
.scrollers i { display: block; width: 0; height: 0; margin: auto; border: 4px solid transparent; border-width: 3px 4px; }
.scrollers .left { border-right-color: #777; border-left: 0; }
.scrollers .forward { border-left-color: #777; border-right: 0; }
.status { flex: none; height: 4px; display: flex; justify-content: flex-end; }
.status i { border-left: 1px solid #b5bac4; width: 71px; }
.status .c1 { width: 109px; }
.status .c2 { width: 101px; }
.status .net { width: 134px; padding: 2px 0 0 5px; }
.status .c3 { width: 70px; }
.net b { display: block; width: 24px; height: 2px; background: repeating-linear-gradient(90deg, #5c7000 0 2px, transparent 2px 3px); }
</style>
